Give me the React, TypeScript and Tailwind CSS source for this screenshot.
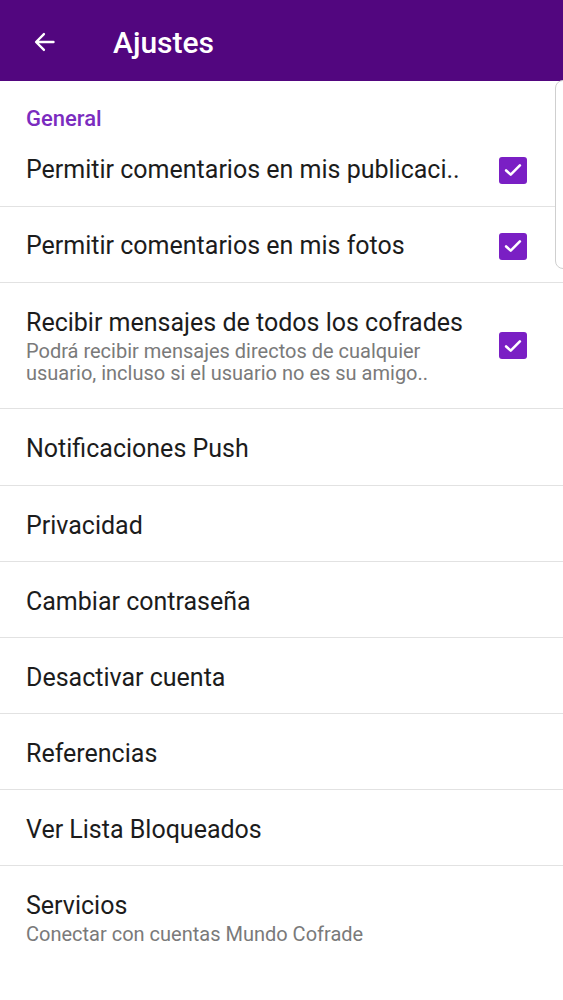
import React, { useState } from 'react';

type Row = {
  id: string;
  title: string;
  subtitle?: string;
  checkable?: boolean;
  height: string;
};

const generalRows: Row[] = [
  { id: 'posts', title: 'Permitir comentarios en mis publicaci..', checkable: true, height: 'h-[76px]' },
  { id: 'photos', title: 'Permitir comentarios en mis fotos', checkable: true, height: 'h-[76px]' },
  {
    id: 'messages',
    title: 'Recibir mensajes de todos los cofrades',
    subtitle: 'Podrá recibir mensajes directos de cualquier usuario, incluso si el usuario no es su amigo..',
    checkable: true,
    height: 'h-[126px]',
  },
];

const menuRows: Row[] = [
  { id: 'push', title: 'Notificaciones Push', height: 'h-[77px] pt-[4px]' },
  { id: 'privacy', title: 'Privacidad', height: 'h-[76px] pt-[4px]' },
  { id: 'password', title: 'Cambiar contraseña', height: 'h-[76px] pt-[4px]' },
  { id: 'deactivate', title: 'Desactivar cuenta', height: 'h-[76px] pt-[4px]' },
  { id: 'refs', title: 'Referencias', height: 'h-[76px] pt-[4px]' },
  { id: 'blocked', title: 'Ver Lista Bloqueados', height: 'h-[76px] pt-[4px]' },
  { id: 'services', title: 'Servicios', subtitle: 'Conectar con cuentas Mundo Cofrade', height: 'h-[104px] pt-[1px]' },
  { id: 'about', title: 'Nosotros', height: 'h-[76px] pt-[5px]' },
];

const CheckBox = ({ checked, onClick }: { checked: boolean; onClick: () => void }) => (
  <button
    onClick={onClick}
    className={`w-[28px] h-[27px] rounded-[3px] flex items-center justify-center flex-shrink-0 ${checked ? 'bg-[#7a1fc4]' : 'border-2 border-gray-500 bg-white'}`}
  >
    {checked && (
      <svg width="22" height="22" viewBox="0 0 24 24" fill="none">
        <path d="M4.5 12.5l5 4.5 10-10" stroke="white" strokeWidth="2.8" strokeLinecap="round" strokeLinejoin="round" />
      </svg>
    )}
  </button>
);

const App: React.FC = () => {
  const [checks, setChecks] = useState<Record<string, boolean>>({ posts: true, photos: true, messages: true });

  const toggle = (id: string) => setChecks((c) => ({ ...c, [id]: !c[id] }));

  return (
    <div className="relative w-full h-[1000px] overflow-hidden bg-white font-['Roboto',sans-serif]">
      <header className="h-[81px] bg-[#52067f] flex items-center pt-[3px]">
        <button className="ml-[31px] w-[27px] h-[27px] flex items-center justify-center">
          <svg width="28" height="28" viewBox="0 0 24 24" fill="none">
            <path d="M20 12H5M11.5 5L4.5 12l7 7" stroke="white" strokeWidth="2.1" strokeLinecap="round" strokeLinejoin="round" />
          </svg>
        </button>
        <h1 className="ml-[55px] text-white text-[30px] font-medium">Ajustes</h1>
      </header>

      <div className="h-[50px] flex items-end px-[26px]">
        <span className="text-[#7b2cbf] text-[22px] font-medium leading-[24px]">General</span>
      </div>

      {generalRows.map((row) => (
        <div
          key={row.id}
          className={`flex items-center justify-between pl-[26px] pr-[36px] border-b border-[#e2e2e2] ${row.height} ${row.subtitle ? '' : 'pt-[3px]'}`}
        >
          <div className="flex flex-col pr-3">
            <span className="text-[25px] text-[#1c1c1c] leading-[30px] whitespace-nowrap">{row.title}</span>
            {row.subtitle && (
              <span className="text-[20px] text-[#7a7a7a] leading-[22px] mt-[2px] max-w-[440px]">{row.subtitle}</span>
            )}
          </div>
          {row.checkable && <CheckBox checked={!!checks[row.id]} onClick={() => toggle(row.id)} />}
        </div>
      ))}

      {menuRows.map((row, i) => (
        <div
          key={row.id}
          className={`flex flex-col justify-center px-[26px] ${i < menuRows.length - 2 ? 'border-b border-[#e2e2e2]' : ''} ${row.height}`}
        >
          <span className="text-[25px] text-[#1c1c1c] leading-[30px]">{row.title}</span>
          {row.subtitle && <span className="text-[20px] text-[#7a7a7a] leading-[24px] mt-[1px]">{row.subtitle}</span>}
        </div>
      ))}

      <div className="absolute left-[555px] top-[80px] w-[20px] h-[189px] rounded-tl-[8px] rounded-bl-[8px] border border-[#cfcfcf] bg-white" />
    </div>
  );
};

export default App;
